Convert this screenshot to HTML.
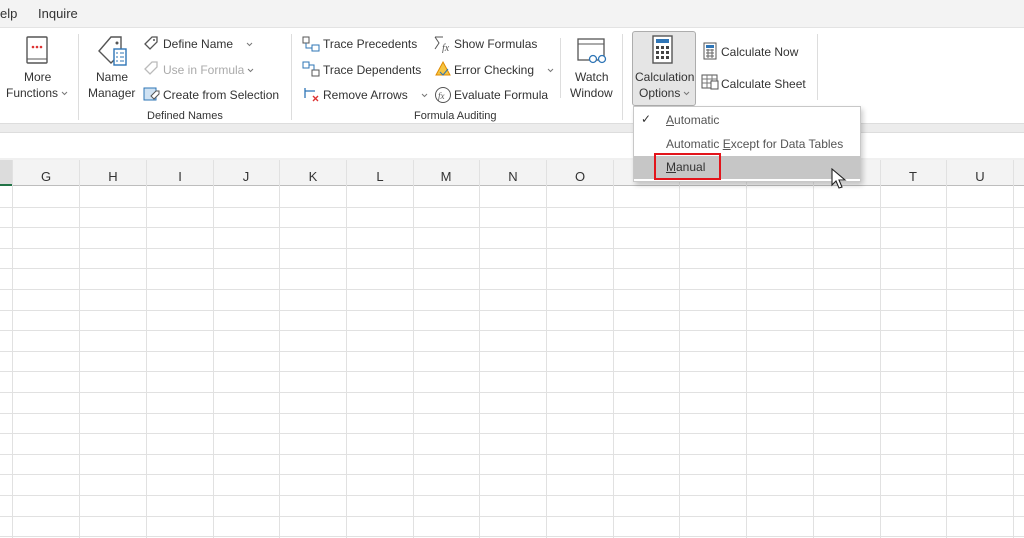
<!DOCTYPE html>
<html><head><style>
*{margin:0;padding:0;box-sizing:border-box}
body{width:1024px;height:538px;overflow:hidden;background:#fff;font-family:"Liberation Sans",sans-serif;font-size:12px;color:#333;position:relative}
.a{position:absolute;white-space:nowrap}
.g{color:#aaa}
.sep{position:absolute;width:1px;background:#ddd}
.col{position:absolute;top:160px;height:378px;width:1px;background:#e1e1e1}
.row{position:absolute;left:0;width:1024px;height:1px;background:#e1e1e1}
.ch{position:absolute;top:160px;height:26px;line-height:34px;text-align:center;font-size:13px;color:#333;width:66px}
.cv{display:inline-block;width:7px;height:5px;margin-left:3px;vertical-align:middle}
</style></head><body>
<svg width="0" height="0" style="position:absolute"><defs><symbol id="cv" viewBox="0 0 7 5"><path d="M1 1l2.5 2.5L6 1" fill="none" stroke="#777" stroke-width="1"/></symbol></defs></svg>
<div class="a" style="left:0;top:0;width:1024px;height:28px;background:#f3f3f3;border-bottom:1px solid #e3e3e3"></div>
<div class="a" style="left:0;top:6px;font-size:13px">elp</div>
<div class="a" style="left:38px;top:6px;font-size:13px">Inquire</div>
<div class="a" style="left:0;top:123px;width:1024px;height:10px;background:#ececec;border-top:1px solid #ddd;border-bottom:1px solid #ddd"></div>
<div class="a" style="left:0;top:158px;width:1024px;height:2px;background:#f0f0f0"></div>
<div class="a" style="left:0;top:160px;width:1024px;height:26px;background:#f3f3f3;border-bottom:1px solid #bdbdbd"></div>
<div class="a" style="left:0;top:160px;width:12px;height:26px;background:#dcdcdc;border-bottom:2px solid #217346"></div>

<div class="row" style="top:207px"></div><div class="row" style="top:227px"></div><div class="row" style="top:248px"></div><div class="row" style="top:268px"></div><div class="row" style="top:289px"></div><div class="row" style="top:310px"></div><div class="row" style="top:330px"></div><div class="row" style="top:351px"></div><div class="row" style="top:371px"></div><div class="row" style="top:392px"></div><div class="row" style="top:413px"></div><div class="row" style="top:433px"></div><div class="row" style="top:454px"></div><div class="row" style="top:474px"></div><div class="row" style="top:495px"></div><div class="row" style="top:516px"></div><div class="row" style="top:536px"></div>
<div class="col" style="left:12px"></div><div class="col" style="left:79px"></div><div class="col" style="left:146px"></div><div class="col" style="left:213px"></div><div class="col" style="left:279px"></div><div class="col" style="left:346px"></div><div class="col" style="left:413px"></div><div class="col" style="left:479px"></div><div class="col" style="left:546px"></div><div class="col" style="left:613px"></div><div class="col" style="left:679px"></div><div class="col" style="left:746px"></div><div class="col" style="left:813px"></div><div class="col" style="left:880px"></div><div class="col" style="left:946px"></div><div class="col" style="left:1013px"></div>
<div class="ch" style="left:13px">G</div><div class="ch" style="left:80px">H</div><div class="ch" style="left:147px">I</div><div class="ch" style="left:213px">J</div><div class="ch" style="left:280px">K</div><div class="ch" style="left:347px">L</div><div class="ch" style="left:413px">M</div><div class="ch" style="left:480px">N</div><div class="ch" style="left:547px">O</div><div class="ch" style="left:880px">T</div><div class="ch" style="left:947px">U</div>

<div class="sep" style="left:78px;top:34px;height:86px"></div>
<div class="sep" style="left:291px;top:34px;height:86px"></div>
<div class="sep" style="left:560px;top:38px;height:60px"></div>
<div class="sep" style="left:622px;top:34px;height:86px"></div>
<div class="sep" style="left:817px;top:34px;height:66px"></div>

<svg class="a" style="left:26px;top:36px" width="22" height="30"><rect x="1" y="1" width="20" height="26" rx="1" fill="#fff" stroke="#555" stroke-width="1.4"/><line x1="1" y1="23" x2="21" y2="23" stroke="#555"/><circle cx="7" cy="11" r="1.3" fill="#d33"/><circle cx="11" cy="11" r="1.3" fill="#d33"/><circle cx="15" cy="11" r="1.3" fill="#d33"/></svg>
<div class="a" style="left:24px;top:70px">More</div>
<div class="a" style="left:6px;top:86px">Functions<svg class="cv"><use href="#cv"/></svg></div>

<svg class="a" style="left:97px;top:35px" width="34" height="32"><path d="M14 2h10v16l-10 10-12-12z" fill="#fff" stroke="#555" stroke-width="1.4"/><circle cx="20" cy="8" r="1.5" fill="#555"/><rect x="17" y="14" width="12" height="16" fill="#fff" stroke="#2e75b6" stroke-width="1.4"/><path d="M19 18h2M23 18h4M19 22h2M23 22h4M19 26h2M23 26h4" stroke="#2e75b6"/></svg>
<div class="a" style="left:96px;top:70px">Name</div>
<div class="a" style="left:88px;top:86px">Manager</div>

<svg class="a" style="left:143px;top:36px" width="16" height="16"><path d="M2 8l7-7h5v5l-7 7z" fill="none" stroke="#555" stroke-width="1.3"/><circle cx="11" cy="4" r="1" fill="#555"/></svg>
<div class="a" style="left:163px;top:37px">Define Name &nbsp;&nbsp;<svg class="cv"><use href="#cv"/></svg></div>
<svg class="a" style="left:143px;top:61px" width="16" height="16"><path d="M2 8l7-7h5v5l-7 7z" fill="none" stroke="#bbb" stroke-width="1.3"/></svg>
<div class="a g" style="left:163px;top:63px">Use in Formula<svg class="cv"><use href="#cv"/></svg></div>
<svg class="a" style="left:143px;top:86px" width="18" height="16"><rect x="1" y="2" width="12" height="12" fill="#cfe2f3" stroke="#2e75b6"/><path d="M8 10l5-5h3v3l-5 5z" fill="#fff" stroke="#555"/></svg>
<div class="a" style="left:163px;top:88px">Create from Selection</div>
<div class="a" style="left:147px;top:110px;font-size:11px">Defined Names</div>

<svg class="a" style="left:302px;top:36px" width="18" height="16"><rect x="1" y="1" width="6" height="6" fill="none" stroke="#555"/><rect x="10" y="9" width="7" height="6" fill="none" stroke="#2e75b6"/><path d="M4 7v5h6" stroke="#2e75b6" fill="none"/></svg>
<div class="a" style="left:323px;top:37px">Trace Precedents</div>
<svg class="a" style="left:302px;top:61px" width="18" height="16"><rect x="1" y="1" width="6" height="6" fill="none" stroke="#2e75b6"/><rect x="10" y="9" width="7" height="6" fill="none" stroke="#555"/><path d="M7 4h5v5" stroke="#2e75b6" fill="none"/></svg>
<div class="a" style="left:323px;top:63px">Trace Dependents</div>
<svg class="a" style="left:302px;top:86px" width="18" height="18"><path d="M3 2v10M3 5h10" stroke="#2e75b6" stroke-width="1.3" fill="none"/><path d="M11 10l5 5M16 10l-5 5" stroke="#d33" stroke-width="1.4"/></svg>
<div class="a" style="left:323px;top:88px">Remove Arrows &nbsp;&nbsp;<svg class="cv"><use href="#cv"/></svg></div>

<svg class="a" style="left:433px;top:35px" width="20" height="18"><path d="M2 2h8M2 2l4 6-4 6" fill="none" stroke="#555"/><text x="9" y="16" font-size="10" font-style="italic" fill="#555" font-family="Liberation Serif">fx</text></svg>
<div class="a" style="left:454px;top:37px">Show Formulas</div>
<svg class="a" style="left:434px;top:60px" width="18" height="18"><path d="M9 2l7 13H2z" fill="#f5c542" stroke="#e08a00"/><path d="M6 12l3 3 5-6" stroke="#2e75b6" fill="none"/></svg>
<div class="a" style="left:454px;top:63px">Error Checking &nbsp;&nbsp;<svg class="cv"><use href="#cv"/></svg></div>
<svg class="a" style="left:434px;top:86px" width="18" height="18"><circle cx="9" cy="9" r="7.5" fill="none" stroke="#555"/><text x="4" y="13" font-size="9" font-style="italic" fill="#555" font-family="Liberation Serif">fx</text></svg>
<div class="a" style="left:454px;top:88px">Evaluate Formula</div>
<div class="a" style="left:414px;top:110px;font-size:11px">Formula Auditing</div>

<svg class="a" style="left:577px;top:38px" width="32" height="28"><rect x="1" y="1" width="26" height="21" fill="#fff" stroke="#555" stroke-width="1.3"/><line x1="1" y1="6" x2="27" y2="6" stroke="#555"/><circle cx="16" cy="21" r="3.5" fill="#fff" stroke="#2e75b6" stroke-width="1.3"/><circle cx="25" cy="21" r="3.5" fill="#fff" stroke="#2e75b6" stroke-width="1.3"/></svg>
<div class="a" style="left:575px;top:70px">Watch</div>
<div class="a" style="left:570px;top:86px">Window</div>

<div class="a" style="left:632px;top:31px;width:64px;height:75px;background:#e5e5e5;border:1px solid #adadad;border-radius:3px"></div>
<svg class="a" style="left:652px;top:35px" width="22" height="30"><rect x="1" y="1" width="19" height="27" fill="#fff" stroke="#555" stroke-width="1.4"/><rect x="4" y="4" width="13" height="4" fill="#2e75b6"/><g fill="#444"><rect x="4" y="11" width="3" height="3"/><rect x="9" y="11" width="3" height="3"/><rect x="14" y="11" width="3" height="3"/><rect x="4" y="16" width="3" height="3"/><rect x="9" y="16" width="3" height="3"/><rect x="14" y="16" width="3" height="3"/><rect x="4" y="21" width="3" height="3"/><rect x="9" y="21" width="3" height="3"/><rect x="14" y="21" width="3" height="3"/></g></svg>
<div class="a" style="left:635px;top:70px">Calculation</div>
<div class="a" style="left:639px;top:86px">Options<svg class="cv"><use href="#cv"/></svg></div>

<svg class="a" style="left:703px;top:42px" width="14" height="18"><rect x="1" y="1" width="12" height="16" fill="#fff" stroke="#555"/><rect x="3" y="3" width="8" height="3" fill="#2e75b6"/><path d="M3 8h8M3 11h8M3 14h8M5 7v9M9 7v9" stroke="#666"/></svg>
<div class="a" style="left:721px;top:45px">Calculate Now</div>
<svg class="a" style="left:701px;top:74px" width="18" height="16"><rect x="1" y="1" width="15" height="13" fill="#fff" stroke="#555"/><path d="M1 5h15M6 1v13M11 1v13M1 9h15" stroke="#777"/><rect x="10" y="7" width="7" height="8" fill="#fff" stroke="#555"/></svg>
<div class="a" style="left:721px;top:77px">Calculate Sheet</div>

<div class="a" style="left:633px;top:106px;width:228px;height:76px;background:#fff;border:1px solid #c8c8c8;box-shadow:2px 3px 5px rgba(0,0,0,.2)"></div>
<div class="a" style="left:641px;top:112px;font-size:12px;color:#333">✓</div>
<div class="a" style="left:666px;top:113px;color:#555"><u>A</u>utomatic</div>
<div class="a" style="left:666px;top:137px;color:#555">Automatic <u>E</u>xcept for Data Tables</div>
<div class="a" style="left:634px;top:156px;width:226px;height:23px;background:#c6c6c6"></div>
<div class="a" style="left:654px;top:153px;width:67px;height:27px;border:2px solid #e3141b"></div>
<div class="a" style="left:666px;top:160px;color:#333"><u>M</u>anual</div>
<svg class="a" style="left:831px;top:168px" width="16" height="22"><path d="M1 1v16l4-4 3 7 3-1-3-7h6z" fill="#fff" stroke="#222" stroke-width="1.1"/></svg>
</body></html>
